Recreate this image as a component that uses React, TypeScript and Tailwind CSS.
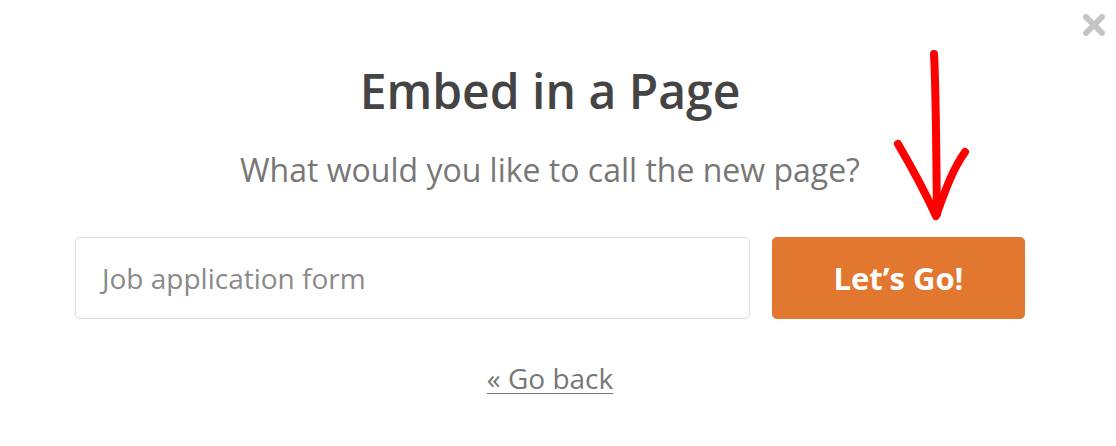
export default function App() {
  return (
    <div className="relative w-[1116px] h-[446px] bg-white overflow-hidden" style={{ fontFamily: '"Open Sans", "Noto Sans", sans-serif' }}>
      <button className="absolute right-[10px] top-[13px] text-[#c4c4c4]" aria-label="Close">
        <svg width="24" height="24" viewBox="0 0 24 24">
          <path d="M4 4L20 20M20 4L4 20" stroke="currentColor" strokeWidth="6" strokeLinecap="round" />
        </svg>
      </button>

      {/* hand-drawn annotation arrow */}
      <svg className="absolute left-[890px] top-[48px]" width="90" height="180" viewBox="0 0 90 180">
        <path d="M44 6 C46 40 46 90 47 166" stroke="#ff0000" strokeWidth="8" fill="none" strokeLinecap="round" />
        <path d="M8 96 C22 120 36 146 46 168 C54 146 62 122 75 104" stroke="#ff0000" strokeWidth="8" fill="none" strokeLinecap="round" strokeLinejoin="round" />
      </svg>

      <div className="ml-[75px] w-[950px] flex flex-col items-center pt-[61px]">
        <h1 className="text-[48px] leading-[60px] font-semibold text-[#444444]">Embed in a Page</h1>
        <p className="mt-[27px] text-[32px] leading-[44px] text-[#777777]">What would you like to call the new page?</p>
        <div className="mt-[45px] w-full flex gap-[22px]">
          <div className="flex-1 h-[82px] border border-[#dddddd] rounded-[5px] flex items-center px-[26px] text-[28px] text-[#8a8a8a]">
            Job application form
          </div>
          <button className="w-[253px] h-[82px] rounded-[5px] bg-[#e27730] text-white text-[31px] font-bold">
            Let’s Go!
          </button>
        </div>
        <a className="mt-[39px] text-[28px] leading-[40px] text-[#777777] underline underline-offset-[4px] decoration-1">« Go back</a>
      </div>
    </div>
  );
}
